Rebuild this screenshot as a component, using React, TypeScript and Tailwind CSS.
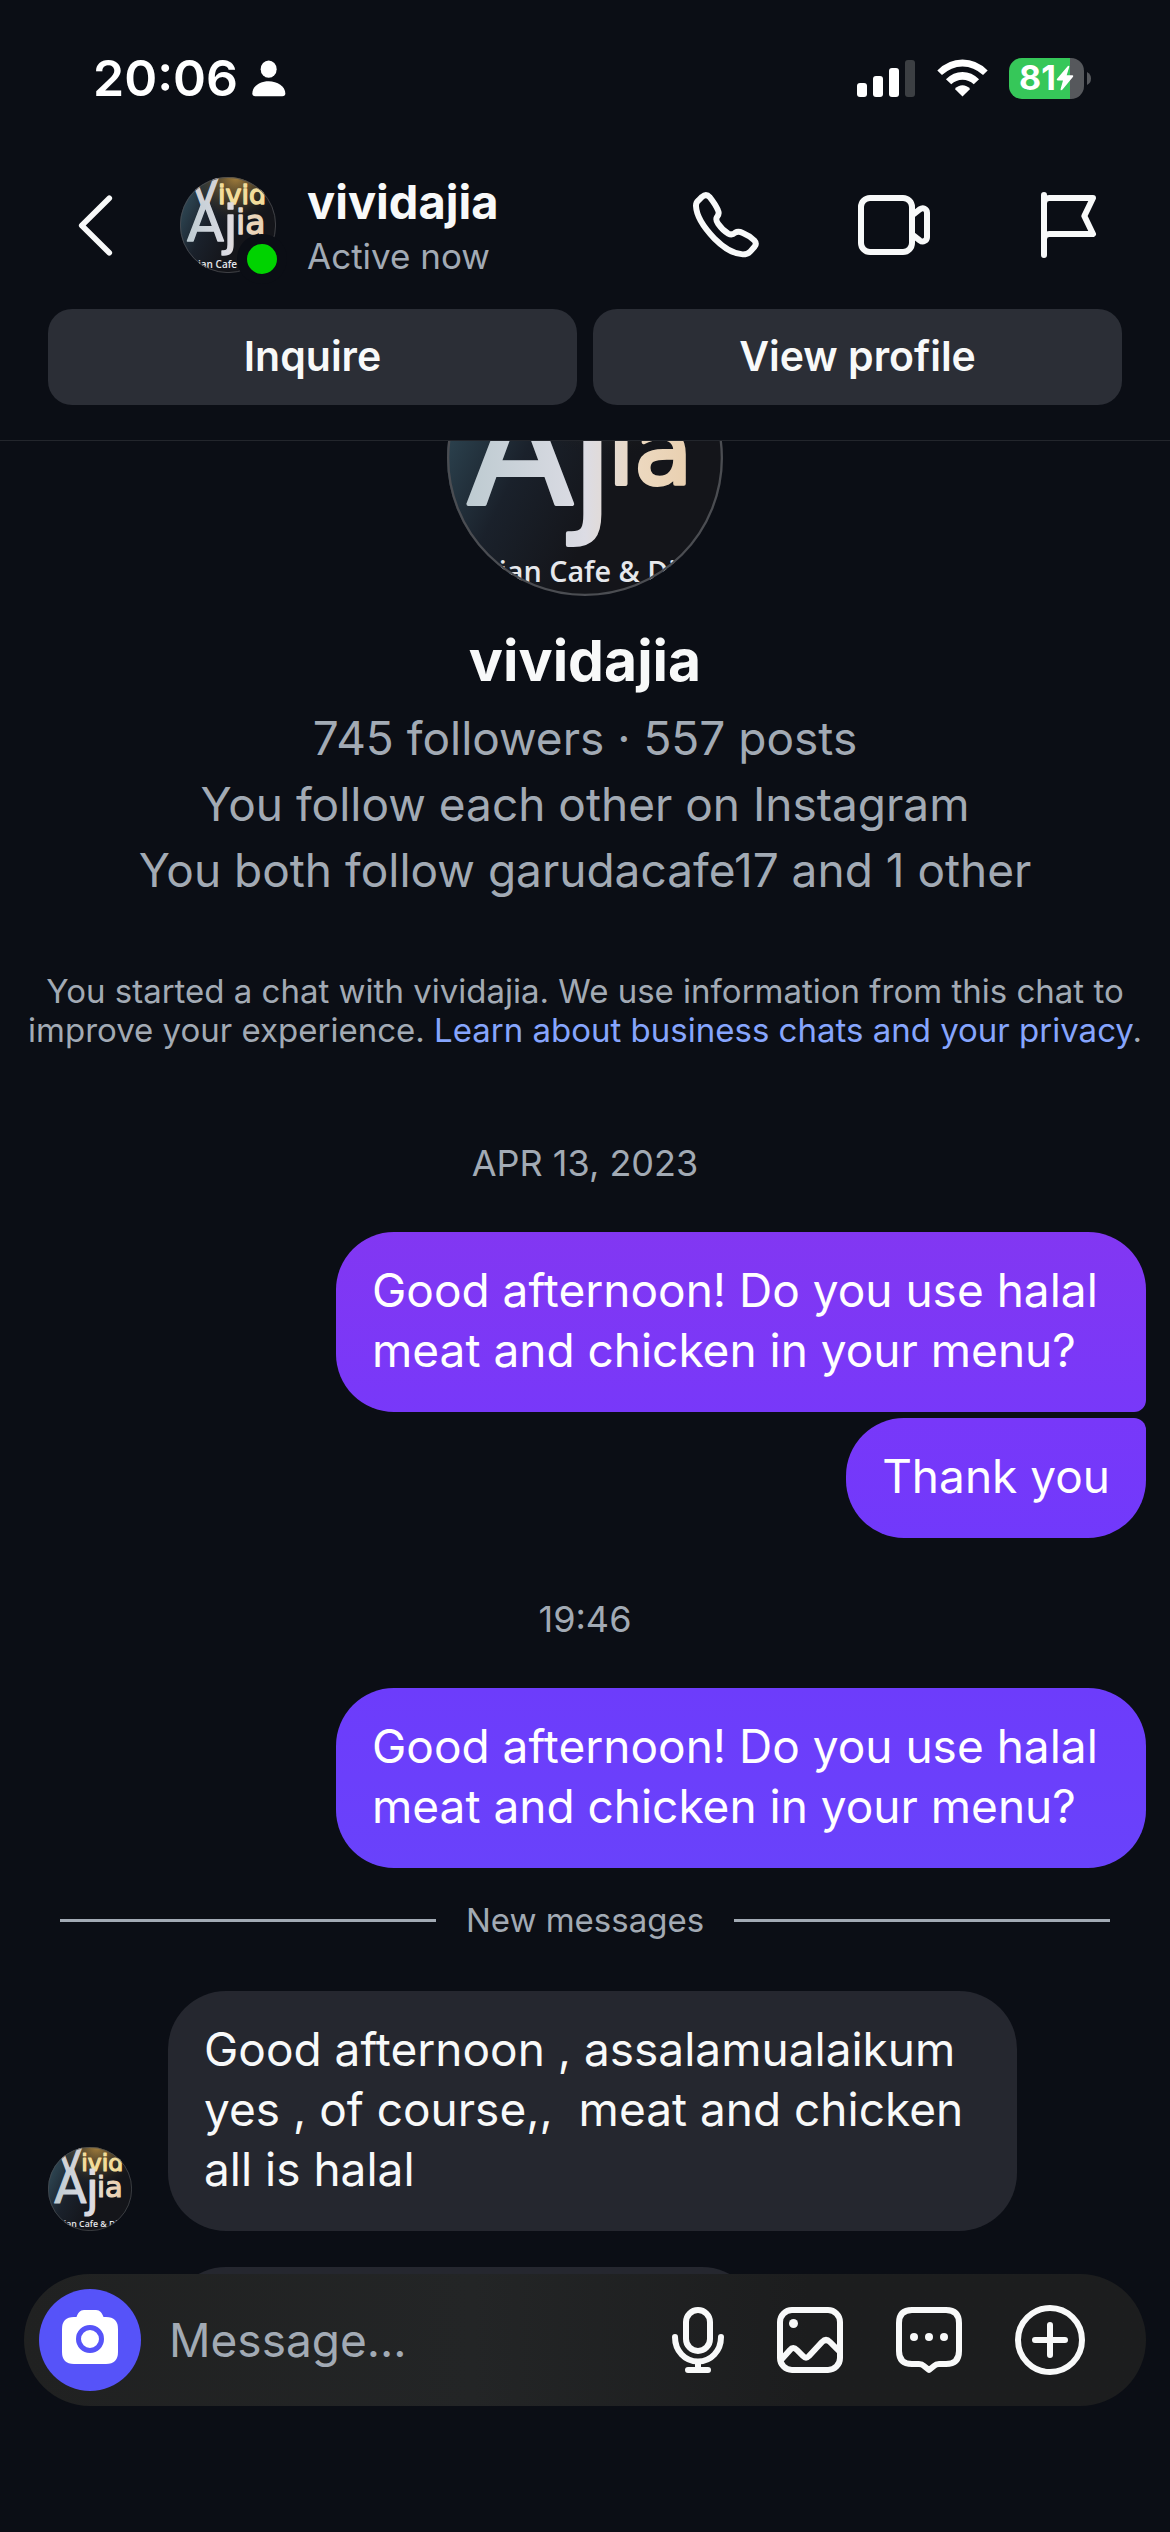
import React from "react";

function Avatar({ id, className }: { id: string; className: string }) {
  return (
    <svg viewBox="0 0 96 96" className={className} role="img" aria-label="vividajia profile photo">
      <defs>
        <clipPath id={`${id}-clip`}>
          <circle cx="48" cy="48" r="48" />
        </clipPath>
        <radialGradient id={`${id}-glow`} cx="0.58" cy="0" r="0.5">
          <stop offset="0" stopColor="#a57f3c" />
          <stop offset="0.5" stopColor="#5a4a2a" stopOpacity="0.7" />
          <stop offset="1" stopColor="#16181d" stopOpacity="0" />
        </radialGradient>
        <linearGradient id={`${id}-base`} x1="0" y1="0.3" x2="0.6" y2="0.6">
          <stop offset="0" stopColor="#2f4855" />
          <stop offset="0.5" stopColor="#1a212b" />
          <stop offset="1" stopColor="#14151a" />
        </linearGradient>
        <linearGradient id={`${id}-ink`} x1="0" y1="0" x2="96" y2="0" gradientUnits="userSpaceOnUse">
          <stop offset="0.05" stopColor="#bccad0" />
          <stop offset="0.5" stopColor="#dcdce4" />
          <stop offset="0.7" stopColor="#ecd8bf" />
          <stop offset="0.9" stopColor="#e9cfae" />
        </linearGradient>
      </defs>
      <g clipPath={`url(#${id}-clip)`}>
        <rect width="96" height="96" fill={`url(#${id}-base)`} />
        <rect width="96" height="96" fill={`url(#${id}-glow)`} />
        <g fontFamily="'DejaVu Sans', sans-serif" strokeWidth="1.4" strokeLinejoin="round">
          <text x="11" y="31" fontSize="40" fill="#d3d3d6" stroke="#d3d3d6">V</text>
          <text x="38" y="27" fontSize="27" fill="#f3dd9b" stroke="#f3dd9b">ivid</text>
          <text x="7" y="64" fontSize="54" fill={`url(#${id}-ink)`} stroke={`url(#${id}-ink)`}>
            A
            <tspan x="43" y="67" fontSize="54">j</tspan>
            <tspan x="56" y="57" fontSize="33">ia</tspan>
          </text>
        </g>
        <text x="18" y="91" fontSize="10" fontFamily="'Open Sans', sans-serif" fontWeight="600" fill="#e6e8ec">
          ian Cafe &amp; Di
        </text>
      </g>
      <circle cx="48" cy="48" r="47.6" fill="none" stroke="#4b4d52" strokeWidth="0.8" />
    </svg>
  );
}

function StatusBar() {
  return (
    <div className="flex h-[156px] items-center justify-between pl-[93px] pr-[79px] text-white">
      <div className="flex items-center gap-[14px]">
        <span className="text-[50px] leading-[60px] font-semibold">20:06</span>
        <svg viewBox="572 90 102 110" className="h-[37px] w-[34px]" fill="currentColor" aria-hidden="true">
          <ellipse cx="622" cy="117" rx="24" ry="26" />
          <path d="M573 190C573 168 596 153 622 153S672 168 672 190Q672 198 663 198H582Q573 198 573 190Z" />
        </svg>
      </div>
      <div className="flex items-center">
        <svg viewBox="0 0 58 37" className="mr-[22px] h-[37px] w-[58px]" fill="currentColor" aria-hidden="true">
          <rect x="0" y="23" width="10" height="14" rx="3" />
          <rect x="16" y="16" width="10" height="21" rx="3" />
          <rect x="32" y="8" width="10" height="29" rx="3" />
          <rect x="48" y="0" width="10" height="37" rx="3" fill="#3c3f43" />
        </svg>
        <svg viewBox="828 86 154 114" className="mr-[21px] h-[38px] w-[51px]" fill="currentColor" aria-hidden="true">
          <path d="M829 120Q862 87 905 87Q948 87 981 120L967 134Q939 108 905 108Q871 108 843 134Z" />
          <path d="M855 147Q877 125 905 125Q933 125 955 147L939 162Q924 148 905 148Q886 148 871 162Z" />
          <path d="M882 176Q892 165 905 165Q918 165 928 176L905 199Z" />
        </svg>
        <div className="flex h-[41px] w-[75px] items-center justify-center overflow-hidden rounded-[13px] bg-linear-to-r from-[#36c759] from-81% to-[#56585c] to-81%">
          <span className="text-[34px] leading-[40px] font-bold">81</span>
          <svg viewBox="1197 107 54 77" className="h-[26px] w-[18px]" fill="currentColor" aria-hidden="true">
            <path d="M1232 110Q1237 106 1237 112L1229 137H1246Q1251 138 1247 143L1216 181Q1210 185 1211 178L1218 153H1202Q1197 151 1201 147Z" />
          </svg>
        </div>
        <svg viewBox="0 0 4 13" className="ml-[3px] h-[13px] w-[4px]" fill="#56585c" aria-hidden="true">
          <path d="M0 0Q4 2 4 6.500Q4 11 0 13Z" />
        </svg>
      </div>
    </div>
  );
}

function Header() {
  return (
    <header className="border-b border-[#23262c] pb-[35px]">
      <StatusBar />
      <div className="mt-[21px] flex h-24 items-center pl-[78px] pr-[73px]">
        <button type="button" aria-label="Back" className="mr-[66px]">
          <svg viewBox="51 490 108 190" className="h-[63px] w-[36px]" fill="none" stroke="currentColor" strokeWidth="17" strokeLinecap="round" strokeLinejoin="round">
            <path d="M145 503L62 585L145 667" />
          </svg>
        </button>
        <div className="relative size-24">
          <Avatar id="top" className="size-24" />
          <span className="absolute -right-[11px] -bottom-[11px] size-[50px] rounded-full border-[10px] border-[#0b0e15] bg-[#00d300]" />
        </div>
        <div className="ml-[31px] pt-[10px]">
          <h1 className="text-[47px] leading-[52px] font-bold">vividajia</h1>
          <p className="text-[35px] leading-[56px] text-[#a2aab4]">Active now</p>
        </div>
        <div className="ml-auto flex items-center gap-[99px]">
          <button type="button" aria-label="Voice call">
            <svg viewBox="99 485 200 200" className="size-[66px]" fill="none" stroke="currentColor" strokeWidth="18" strokeLinejoin="round">
              <path d="M126 500Q139 489 150 501Q168 524 175 541Q180 551 171 562Q167 570 175 581Q189 601 206 611Q217 617 227 608Q236 603 250 609Q270 617 285 632Q293 641 286 650L273 665Q265 674 250 674Q210 672 164 626Q110 570 108 527Q108 517 115 511Z" />
            </svg>
          </button>
          <button type="button" aria-label="Video call">
            <svg viewBox="594 486 252 198" className="h-[66px] w-[84px]" fill="none" stroke="currentColor" strokeWidth="18" strokeLinejoin="round">
              <rect x="603" y="504" width="153" height="162" rx="27" />
              <path d="M760 553L779 538Q787 533 793 536Q801 540 801 548V622Q801 630 793 633Q787 637 779 631L760 616" />
            </svg>
          </button>
          <button type="button" aria-label="Flag conversation">
            <svg viewBox="1143 486 168 198" className="h-[66px] w-[56px]" fill="none" stroke="currentColor" strokeWidth="18" strokeLinecap="round" strokeLinejoin="round">
              <path d="M1152 495V675M1152 520Q1152 504 1168 504H1299L1273 558L1299 612H1168Q1152 612 1152 628" />
            </svg>
          </button>
        </div>
      </div>
      <div className="mt-9 grid grid-cols-2 gap-4 px-12">
        <button type="button" className="h-24 rounded-3xl bg-[#2b2e36] text-[41px] font-semibold">Inquire</button>
        <button type="button" className="h-24 rounded-3xl bg-[#2b2e36] text-[41px] font-semibold">View profile</button>
      </div>
    </header>
  );
}

function Timestamp({ children }: { children: React.ReactNode }) {
  return <time className="block text-center text-[36px] leading-[48px] text-[#a2aab4]">{children}</time>;
}

const bubble = "px-[36px] pt-[28px] pb-[32px] text-[46px] leading-[60px] whitespace-pre-wrap";

function Composer() {
  return (
    <form
      onSubmit={(e) => e.preventDefault()}
      className="fixed inset-x-6 bottom-[126px] flex h-[132px] items-center rounded-full bg-linear-to-r from-[#202121] via-[#232526] via-40% to-[#1c1d1e] to-70% pr-[61px] pl-[15px]"
    >
      <button type="button" aria-label="Camera" className="flex size-[102px] shrink-0 items-center justify-center rounded-full bg-[#5653f9]">
        <svg viewBox="0 0 56 56" className="mb-[6px] size-[56px]" aria-hidden="true">
          <path fill="#fff" d="M12 8H14.500C16 4 18 1 22 1H34C38 1 40 4 41.500 8H44Q56 8 56 20V43Q56 55 44 55H12Q0 55 0 43V20Q0 8 12 8Z" />
          <circle cx="28" cy="30" r="11.500" fill="none" stroke="#5653f9" strokeWidth="5" />
        </svg>
      </button>
      <input
        type="text"
        aria-label="Message"
        placeholder="Message..."
        className="ml-[28px] min-w-0 flex-1 bg-transparent text-[46px] leading-[60px] outline-none placeholder:text-[#a2aab4]"
      />
      <div className="flex items-center gap-[53px]">
        <button type="button" aria-label="Record voice message">
          <svg viewBox="0 0 52 66" className="h-[66px] w-[52px]" fill="none" stroke="currentColor" strokeWidth="6" strokeLinecap="round">
            <rect x="14" y="3" width="24" height="41" rx="12" />
            <path d="M3 30C3 44 13 54.500 26 54.500S49 44 49 30M26 55V62M16 63H36" />
          </svg>
        </button>
        <button type="button" aria-label="Send photo">
          <svg viewBox="0 0 66 66" className="size-[66px]" fill="none" stroke="currentColor" strokeWidth="6" strokeLinejoin="round">
            <rect x="3" y="3" width="60" height="60" rx="12" />
            <path d="M4 53L13 43Q16 39 20 43L26 49Q29 52 32 49L45 35Q49 31 53 35L62 44" />
            <circle cx="16.500" cy="16.500" r="4.500" fill="currentColor" stroke="none" />
          </svg>
        </button>
        <button type="button" aria-label="Quick replies">
          <svg viewBox="0 0 66 68" className="h-[68px] w-[66px]" fill="none" stroke="currentColor" strokeWidth="6" strokeLinejoin="round">
            <path d="M16 4H50Q63 4 63 17V45Q63 58 50 58H43Q40 58 38 60L33 64L28 60Q26 58 23 58H16Q3 58 3 45V17Q3 4 16 4Z" />
            <g fill="currentColor" stroke="none">
              <circle cx="18" cy="31" r="4" />
              <circle cx="33" cy="31" r="4" />
              <circle cx="48" cy="31" r="4" />
            </g>
          </svg>
        </button>
        <button type="button" aria-label="More options">
          <svg viewBox="0 0 70 70" className="size-[70px]" fill="none" stroke="currentColor" strokeWidth="6" strokeLinecap="round">
            <circle cx="35" cy="35" r="32" />
            <path d="M35 20V50M20 35H50" />
          </svg>
        </button>
      </div>
    </form>
  );
}

export default function App() {
  return (
    <div className="min-h-screen bg-[#0b0e15] font-['Inter',sans-serif] text-[#f8f9f9]">
      <Header />
      <main className="overflow-hidden pb-[145px]">
        <section className="flex flex-col items-center text-center">
          <Avatar id="profile" className="-mt-[121px] size-[276px]" />
          <h2 className="mt-[29px] text-[57px] leading-[72px] font-bold">vividajia</h2>
          <div className="mt-2 text-[46px] leading-[66px] text-[#a2aab4]">
            <p>745 followers · 557 posts</p>
            <p>You follow each other on Instagram</p>
            <p>You both follow garudacafe17 and 1 other</p>
          </div>
          <p className="mt-[69px] text-[33px] leading-[39px] text-[#a2aab4]">
            You started a chat with vividajia. We use information from this chat to
            <br />
            improve your experience.{" "}
            <a href="#privacy" className="text-[#86a5fd]">Learn about business chats and your privacy</a>.
          </p>
        </section>

        <section className="mt-[89px]">
          <Timestamp>APR 13, 2023</Timestamp>
          <div className="mt-[45px] flex flex-col items-end gap-[6px] px-6 text-white">
            <p className={`${bubble} max-w-[810px] rounded-[58px] rounded-br-xl bg-linear-to-b from-[#8237f2] to-[#7838f9]`}>
              Good afternoon! Do you use halal meat and chicken in your menu?
            </p>
            <p className={`${bubble} rounded-[58px] rounded-tr-xl bg-linear-to-b from-[#7838f9] to-[#7139fb]`}>Thank you</p>
          </div>
        </section>

        <section className="mt-[57px]">
          <Timestamp>19:46</Timestamp>
          <div className="mt-[45px] flex flex-col items-end px-6 text-white">
            <p className={`${bubble} max-w-[810px] rounded-[58px] bg-linear-to-b from-[#6d3cfb] to-[#6942fb]`}>
              Good afternoon! Do you use halal meat and chicken in your menu?
            </p>
          </div>
        </section>

        <div className="mt-[33px] flex items-center gap-[30px] px-[60px] text-[33px] leading-[39px] text-[#a2aab4]">
          <span className="h-[3px] flex-1 bg-[#a2aab4]" />
          New messages
          <span className="h-[3px] flex-1 bg-[#a2aab4]" />
        </div>

        <section className="mt-[51px] grid grid-cols-[84px_1fr] items-end gap-x-9 gap-y-9 px-12">
          <Avatar id="sender" className="size-[84px]" />
          <p className={`${bubble} max-w-[849px] rounded-[58px] bg-[#25272f]`}>
            {"Good afternoon , assalamualaikum yes , of course,,  meat and chicken all is halal"}
          </p>
          <div className="col-start-2 h-[120px] w-[592px] rounded-[58px] bg-[#25272f]" />
        </section>
      </main>
      <Composer />
    </div>
  );
}
